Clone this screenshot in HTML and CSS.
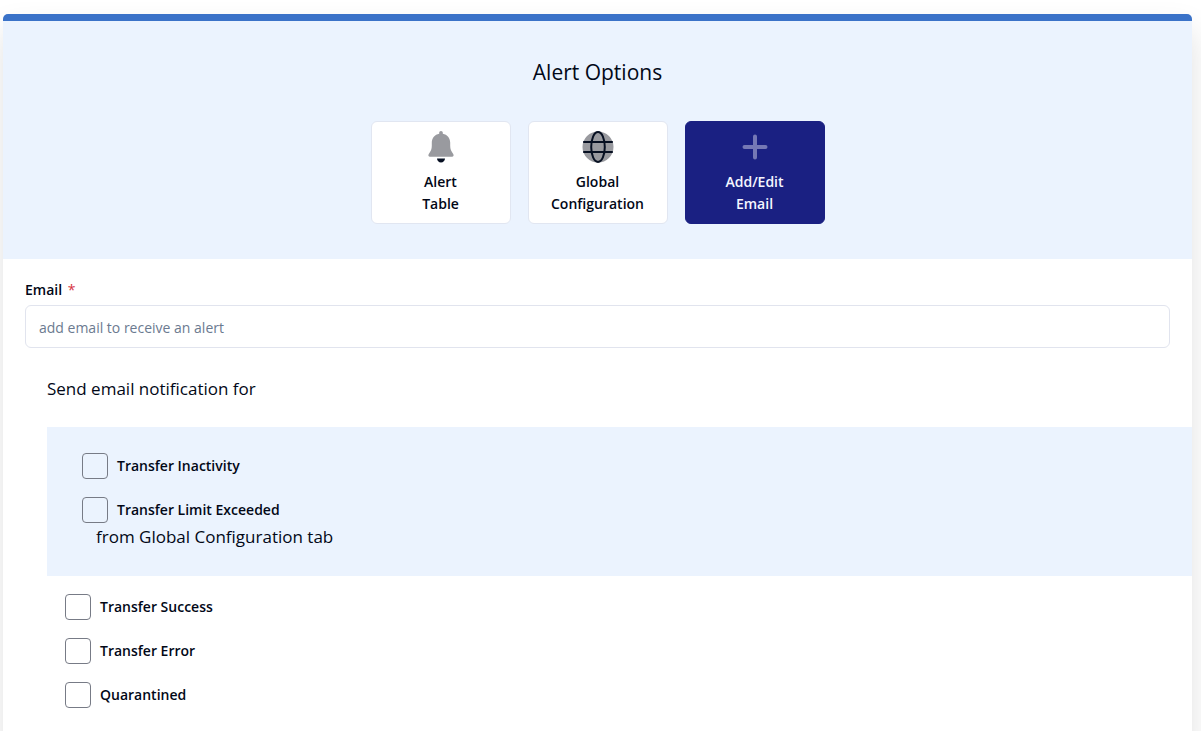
FILE: index.html
```html
<!DOCTYPE html>
<html lang="en">
<head>
<meta charset="utf-8">
<meta name="viewport" content="width=device-width, initial-scale=1">
<title>Alert Options</title>
<link rel="stylesheet" href="styles.css">
</head>
<body>
<main class="card">
  <header class="card-header">
    <h1 class="title">Alert Options</h1>
    <nav class="options" aria-label="Alert options">
      <button type="button" class="option">
        <svg class="option-icon" viewBox="0 0 32 32" aria-hidden="true">
          <path class="tone-soft" d="M16 0c-1 0-1.800.8-1.800 1.800v1C9.800 3.600 6.800 7.200 6.800 11.600v3.200c0 3-.8 5.400-3 8.100-.9 1.100-.4 2.900 1.200 2.900h22c1.600 0 2.100-1.800 1.200-2.900-2.200-2.700-3-5.100-3-8.100v-3.200c0-4.400-3-8-7.400-8.800v-1C17.800.8 17 0 16 0z"/>
          <path class="tone-strong" d="M12 27.500h8c0 2.200-1.800 4-4 4s-4-1.800-4-4z"/>
        </svg>
        <span>Alert</span>
        <span>Table</span>
      </button>
      <button type="button" class="option">
        <svg class="option-icon" viewBox="0 0 32 32" aria-hidden="true">
          <circle class="tone-soft" cx="16" cy="16" r="15.500"/>
          <path class="globe-lines" d="M1.200 11h29.600M1.200 21h29.600M16 1.100C12 1.100 9.200 8 9.200 16S12 30.900 16 30.900 22.800 24 22.800 16 20 1.100 16 1.100z"/>
        </svg>
        <span>Global</span>
        <span>Configuration</span>
      </button>
      <button type="button" class="option option-active" aria-current="page">
        <svg class="option-icon" viewBox="0 0 32 32" aria-hidden="true">
          <path class="plus-lines" d="M16 5.500v21M5.500 16h21"/>
        </svg>
        <span>Add/Edit</span>
        <span>Email</span>
      </button>
    </nav>
  </header>
  <form class="form">
    <div class="field">
      <label class="field-label" for="email">Email <span class="required">*</span></label>
      <input class="text-input" id="email" type="email" placeholder="add email to receive an alert" required>
    </div>
    <section class="notify">
      <h2 class="subtitle">Send email notification for</h2>
      <div class="group group-tinted">
        <label class="check"><input class="check-box" type="checkbox"><span>Transfer Inactivity</span></label>
        <label class="check"><input class="check-box" type="checkbox"><span>Transfer Limit Exceeded</span></label>
        <p class="note">from Global Configuration tab</p>
      </div>
      <div class="group">
        <label class="check"><input class="check-box" type="checkbox"><span>Transfer Success</span></label>
        <label class="check"><input class="check-box" type="checkbox"><span>Transfer Error</span></label>
        <label class="check"><input class="check-box" type="checkbox"><span>Quarantined</span></label>
      </div>
    </section>
  </form>
</main>
</body>
</html>
```
FILE: styles.css
```css
* {
  box-sizing: border-box;
}

body {
  display: flex;
  flex-direction: column;
  min-height: 100vh;
  margin: 0;
  padding: 14px 9px 0 3px;
  background: #fff;
  color: #020817;
  font-family: "Segoe UI", "Open Sans", "Noto Sans", sans-serif;
  font-size: 14px;
  line-height: 22px;
}

.card {
  flex: 1;
  border-top: 7px solid #3a72c8;
  border-radius: 5px 5px 0 0;
  background: #fff;
  box-shadow: 0 16px 32px rgba(0, 0, 0, 0.12);
}

.card-header {
  display: flex;
  flex-direction: column;
  align-items: center;
  gap: 32px;
  padding: 35px 20px;
  background: #ebf3fe;
}

.title {
  margin: 0;
  font-size: 21px;
  font-weight: 400;
  line-height: 33px;
}

.options {
  display: flex;
  flex-wrap: wrap;
  justify-content: center;
  gap: 17px;
}

.option {
  display: flex;
  flex-direction: column;
  align-items: center;
  width: 140px;
  padding: 9px 8px 8px;
  border: 1px solid #e1e6f1;
  border-radius: 6px;
  background: #fff;
  color: inherit;
  font: inherit;
  font-weight: 600;
  cursor: pointer;
}

.option-active {
  border-color: #1a2082;
  background: #1a2082;
  color: #f5f6ff;
}

.option-icon {
  width: 32px;
  height: 32px;
  margin-bottom: 8px;
}

.tone-soft {
  fill: #999a9f;
}

.tone-strong {
  fill: #071022;
}

.globe-lines {
  fill: none;
  stroke: #071022;
  stroke-width: 2;
}

.plus-lines {
  stroke: #7578b5;
  stroke-width: 4;
  stroke-linecap: round;
}

.form {
  padding: 20px 0 22px 22px;
}

.field {
  display: flex;
  flex-direction: column;
  gap: 4px;
  padding-right: 22px;
}

.field-label {
  font-weight: 600;
}

.required {
  margin-left: 2px;
  color: #d6343f;
  font-weight: 400;
}

.text-input {
  width: 100%;
  height: 43px;
  padding: 2px 13px 0;
  border: 1px solid #e1e4ee;
  border-radius: 6px;
  background: #fff;
  color: inherit;
  font: inherit;
}

.text-input::placeholder {
  color: #6b7a90;
  opacity: 1;
}

.notify {
  padding: 28px 0 0 22px;
}

.subtitle {
  margin: 0 0 25px;
  font-size: 17px;
  font-weight: 400;
  line-height: 26px;
}

.group {
  display: flex;
  flex-direction: column;
  align-items: flex-start;
  gap: 18px;
  padding: 18px;
}

.group-tinted {
  padding: 26px 35px;
  background: #ebf3fe;
}

.check {
  display: flex;
  align-items: center;
  gap: 9px;
  font-weight: 600;
}

.check-box {
  flex: none;
  width: 26px;
  height: 26px;
  margin: 0;
  border: 1px solid #777b86;
  border-radius: 4px;
  appearance: none;
}

.check-box:checked {
  background: #1a2082;
}

.note {
  margin: -17px 0 0 14px;
  font-size: 17px;
  line-height: 26px;
}
```
